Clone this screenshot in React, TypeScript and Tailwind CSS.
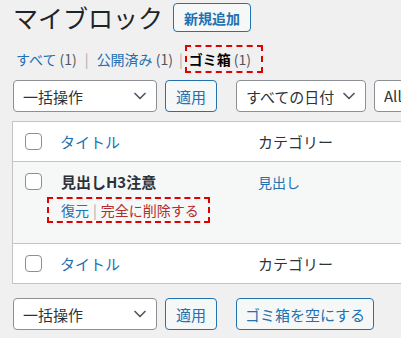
import { ChevronDown } from "lucide-react";

const font = "font-['Noto_Sans_CJK_JP','Noto_Sans',sans-serif]";

function Checkbox() {
  return <span className="block w-[17px] h-[17px] border border-[#8c8f94] rounded-[4px] bg-white" />;
}

function Select({ label, width }: { label: string; width: string }) {
  return (
    <div className={`${width} h-[32px] shrink-0 flex items-center justify-between bg-white border border-[#8c8f94] rounded-[4px] pl-[9px] pr-[6px]`}>
      <span className="text-[15px] leading-none text-[#2c3338]">{label}</span>
      <ChevronDown className="w-[20px] h-[20px] text-[#50575e]" strokeWidth={2} />
    </div>
  );
}

function Button({ label, width }: { label: string; width: string }) {
  return (
    <button className={`${width} h-[32px] shrink-0 flex items-center justify-center bg-[#f6f7f7] border border-[#2271b1] rounded-[4px] text-[15px] leading-none text-[#2271b1]`}>
      {label}
    </button>
  );
}

function HeadRow({ last }: { last?: boolean }) {
  return (
    <div className={`flex items-center h-[39px] bg-white ${last ? "" : "border-b border-[#c3c4c7] h-[40px]"}`}>
      <div className="w-[47px] pl-[12px]">
        <Checkbox />
      </div>
      <span className="w-[198px] text-[15px] leading-none text-[#2271b1]">タイトル</span>
      <span className="text-[15px] leading-none text-[#2c3338]">カテゴリー</span>
    </div>
  );
}

export default function App() {
  return (
    <div className={`${font} w-[401px] h-[338px] overflow-hidden bg-[#f0f0f1] pl-[12px] pt-[3px]`}>
      {/* Heading */}
      <div className="flex items-center h-[29px]">
        <h1 className="ml-[1px] text-[25px] leading-none font-normal text-[#1d2327]">マイブロック</h1>
        <button className="ml-[10px] h-[29px] px-[10px] bg-[#f6f7f7] border border-[#2271b1] rounded-[4px] text-[14px] leading-none font-semibold text-[#2271b1]">
          新規追加
        </button>
      </div>

      {/* Status filters */}
      <div className="flex items-center h-[28px] mt-[13px] pl-[4px] text-[14px] leading-none">
        <span className="text-[#2271b1]">すべて <span className="text-[#50575e]">(1)</span></span>
        <span className="mx-[8px] text-[#a7aaad]">|</span>
        <span className="text-[#2271b1]">公開済み <span className="text-[#50575e]">(1)</span></span>
        <span className="ml-[6px] mr-[2px] text-[#a7aaad]">|</span>
        <span className="flex items-center h-[28px] border-2 border-dashed border-[#e00000] pl-[2px] pr-[10px]">
          <span className="font-bold text-black">ゴミ箱</span>
          <span className="ml-[3px] text-[#50575e]">(1)</span>
        </span>
      </div>

      {/* Top tablenav */}
      <div className="flex items-center mt-[7px] gap-[8px] pl-[1px]">
        <Select label="一括操作" width="w-[144px]" />
        <Button label="適用" width="w-[52px]" />
        <div className="ml-[11px]">
          <Select label="すべての日付" width="w-[130px]" />
        </div>
        <div className="w-[60px] h-[32px] shrink-0 flex items-center bg-white border border-[#8c8f94] rounded-[4px] pl-[9px] text-[15px] text-[#2c3338]">
          All
        </div>
      </div>

      {/* Table */}
      <div className="mt-[9px] w-[460px] border border-[#c3c4c7] bg-white">
        <HeadRow />
        <div className="flex h-[82px] bg-[#f6f7f7] border-b border-[#c3c4c7]">
          <div className="w-[47px] pl-[12px] pt-[11px]">
            <Checkbox />
          </div>
          <div className="w-[198px] pt-[10px] pl-[1px]">
            <div className="text-[15px] leading-[20px] font-bold text-[#2c3338]">見出しH3注意</div>
            <div className="relative mt-[9px] flex items-center text-[14px] leading-[18px]">
              <span className="text-[#2271b1]">復元</span>
              <span className="mx-[4px] text-[#a7aaad]">|</span>
              <span className="text-[#b32d2e]">完全に削除する</span>
              <span className="absolute left-[-14px] top-[-4px] w-[163px] h-[26px] border-2 border-dashed border-[#e00000]" />
            </div>
          </div>
          <div className="pt-[11px] text-[14px] leading-[18px] text-[#2271b1]">見出し</div>
        </div>
        <HeadRow last />
      </div>

      {/* Bottom tablenav */}
      <div className="flex items-center mt-[14px] gap-[8px] pl-[1px]">
        <Select label="一括操作" width="w-[144px]" />
        <Button label="適用" width="w-[52px]" />
        <div className="ml-[11px]">
          <Button label="ゴミ箱を空にする" width="w-[138px]" />
        </div>
      </div>
    </div>
  );
}
